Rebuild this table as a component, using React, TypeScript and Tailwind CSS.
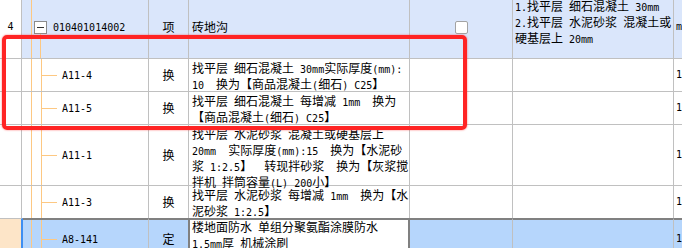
import type { ReactNode } from "react";

// ASCII runs are set in a half-width mono face, the rest in the CJK face
function Mixed({ text }: { text: string }) {
  const parts = text.split(/([\x20-\x7e]+)/);
  return (
    <>
      {parts.map((p, i) =>
        p === "" ? null : /^[\x20-\x7e]+$/.test(p) ? (
          <span key={i} className="font-['DejaVu_Sans_Mono',monospace] text-[10px]">
            {p}
          </span>
        ) : (
          <span key={i}>{p}</span>
        )
      )}
    </>
  );
}

function Lines({ lines }: { lines: string[] }) {
  return (
    <>
      {lines.map((l, i) => (
        <div key={i} className="whitespace-pre">
          <Mixed text={l} />
        </div>
      ))}
    </>
  );
}

function Branch() {
  return (
    <>
      <div className="ml-[9px] w-px shrink-0 self-stretch bg-[#fdc882]" />
      <div className="h-px w-[15px] shrink-0 bg-[#fdc882]" />
    </>
  );
}

function SubRow({
  h,
  code,
  type,
  lines,
  last,
}: {
  h: string;
  code: string;
  type: string;
  lines: string[];
  last?: boolean;
}) {
  return (
    <div className={`flex ${h} ${last ? "" : "border-b border-[#c0c0c0]"}`}>
      <div className="w-[22px] shrink-0 border-r border-[#c0c0c0]" />
      <div className="flex w-[127px] shrink-0 items-center border-r border-[#c0c0c0]">
        <div className="ml-[9px] w-px shrink-0 self-stretch bg-[#fdc882]" />
        <Branch />
        <span className="ml-[5px]">
          <Mixed text={code} />
        </span>
      </div>
      <div className="flex w-[40px] shrink-0 items-center justify-center border-r border-[#c0c0c0]">
        {type}
      </div>
      <div className="w-[221px] shrink-0 border-r border-[#c0c0c0] pl-[3px] pt-[2px]">
        <Lines lines={lines} />
      </div>
      <div className="w-[103px] shrink-0 border-r border-[#c0c0c0]" />
      <div className="w-[161px] shrink-0 border-r border-[#c0c0c0]" />
      <div className="flex flex-1 items-center pl-[2px]">
        <Mixed text="1" />
      </div>
    </div>
  );
}

function Cell({ className, children }: { className: string; children?: ReactNode }) {
  return <div className={`shrink-0 ${className}`}>{children}</div>;
}

export default function App() {
  return (
    <div className="relative h-[248px] w-[682px] overflow-hidden bg-white font-['Noto_Sans_CJK_SC',sans-serif] text-[12px] leading-[14px] text-black">
      <div className="-mt-[4px]">
        {/* parent item row */}
        <div className="flex h-[63px] border-b border-[#c0c0c0]">
          <Cell className="flex w-[22px] items-center justify-center border-r border-[#c0c0c0] bg-white">
            <Mixed text="4" />
          </Cell>
          <Cell className="flex w-[127px] border-r border-[#c0c0c0] bg-[#dae6fb]">
            <div className="ml-[9px] w-px shrink-0 bg-[#fdc882]" />
            <div className="ml-[2px] flex w-[13px] shrink-0 flex-col items-center">
              <div className="flex-1" />
              <div className="flex h-[13px] w-[13px] items-center justify-center border border-[#8c8c8c] bg-white">
                <div className="h-px w-[7px] bg-[#333]" />
              </div>
              <div className="w-px flex-1 bg-[#fdc882]" />
            </div>
            <span className="ml-[6px] self-center">
              <Mixed text="010401014002" />
            </span>
          </Cell>
          <Cell className="flex w-[40px] items-center justify-center border-r border-[#c0c0c0] bg-[#dae6fb]">
            项
          </Cell>
          <Cell className="flex w-[221px] items-center border-r border-[#c0c0c0] bg-[#dae6fb] pl-[3px]">
            砖地沟
          </Cell>
          <Cell className="flex w-[103px] items-center justify-center border-r border-[#c0c0c0] bg-[#dae6fb]">
            <div className="h-[13px] w-[13px] rounded-[2px] border border-[#a3a3a3] bg-white" />
          </Cell>
          <Cell className="w-[161px] border-r border-[#c0c0c0] bg-[#dae6fb] pl-[2px] pt-[3px]">
            <Lines lines={["1.找平层 细石混凝土 30mm", "2.找平层 水泥砂浆 混凝土或", "硬基层上 20mm"]} />
          </Cell>
          <div className="flex flex-1 items-center bg-[#dae6fb] pl-[2px]">
            <Mixed text="m" />
          </div>
        </div>

        <SubRow
          h="h-[33px]"
          code="A11-4"
          type="换"
          lines={["找平层 细石混凝土 30mm实际厚度(mm):", "10  换为【商品混凝土(细石) C25】"]}
        />
        <SubRow
          h="h-[33px]"
          code="A11-5"
          type="换"
          lines={["找平层 细石混凝土 每增减 1mm  换为", "【商品混凝土(细石) C25】"]}
        />
        <SubRow
          h="h-[61px]"
          code="A11-1"
          type="换"
          lines={[
            "找平层 水泥砂浆 混凝土或硬基层上",
            "20mm  实际厚度(mm):15  换为【水泥砂",
            "浆 1:2.5】  转现拌砂浆  换为【灰浆搅",
            "拌机 拌筒容量(L) 200小】",
          ]}
        />
        <SubRow
          h="h-[32px]"
          code="A11-3"
          type="换"
          lines={["找平层 水泥砂浆 每增减 1mm  换为【水", "泥砂浆 1:2.5】"]}
          last
        />

        {/* selected row */}
        <div className="flex h-[40px]">
          <Cell className="w-[23px] border-t border-r-2 border-t-[#c0c0c0] border-r-[#3d8ef2] bg-[#fde5c8]" />
          <Cell className="flex w-[126px] items-center border-t-2 border-r border-t-[#808080] border-r-[#c0c0c0] bg-[#b6d6fc]">
            <div className="ml-[8px] w-px shrink-0 self-stretch bg-[#fdc882]" />
            <Branch />
            <span className="ml-[5px]">
              <Mixed text="A8-141" />
            </span>
          </Cell>
          <Cell className="flex w-[39px] items-center justify-center border-t-2 border-[#808080] bg-[#b6d6fc]">
            定
          </Cell>
          <Cell className="w-[222px] border-x-2 border-t-2 border-[#808080] bg-white pl-[2px]">
            <Lines lines={["楼地面防水 单组分聚氨酯涂膜防水", "1.5mm厚 机械涂刷"]} />
          </Cell>
          <Cell className="w-[103px] border-t-2 border-r border-t-[#808080] border-r-[#c0c0c0] bg-[#b6d6fc]" />
          <Cell className="w-[161px] border-t-2 border-r border-t-[#808080] border-r-[#c0c0c0] bg-[#b6d6fc]" />
          <div className="flex flex-1 items-center border-t-2 border-[#808080] bg-[#b6d6fc] pl-[2px]">
            <Mixed text="1" />
          </div>
        </div>
      </div>

      {/* red annotation frame */}
      <div className="pointer-events-none absolute left-[2px] top-[35px] h-[95px] w-[465px] rounded-[5px] border-4 border-[#ff2424] shadow-[0_0_2px_rgba(255,40,40,0.7)]" />
    </div>
  );
}
